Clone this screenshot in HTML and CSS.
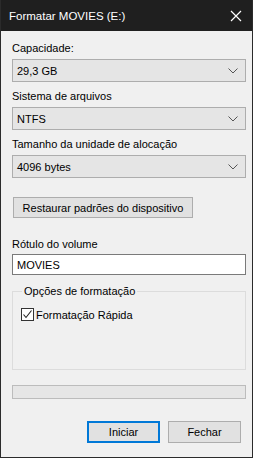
FILE: index.html
```html
<!DOCTYPE html>
<html lang="pt-BR">
<head>
  <meta charset="UTF-8">
  <title>Formatar MOVIES (E:)</title>
  <link rel="stylesheet" href="styles.css">
</head>
<body>
  <div class="window">
    <div class="titlebar">
      <span class="title">Formatar MOVIES (E:)</span>
      <span class="close">
        <svg width="12" height="12" viewBox="0 0 12 12"><path d="M1 1 L11 11 M11 1 L1 11" stroke="#fff" stroke-width="1.2" fill="none"/></svg>
      </span>
    </div>

    <div class="content">
      <label class="lbl first">Capacidade:</label>
      <div class="combo"><span>29,3 GB</span><svg class="arrow" width="10" height="6" viewBox="0 0 10 6"><path d="M0.5 0.5 L5 5 L9.5 0.5" stroke="#555" fill="none"/></svg></div>

      <label class="lbl">Sistema de arquivos</label>
      <div class="combo"><span>NTFS</span><svg class="arrow" width="10" height="6" viewBox="0 0 10 6"><path d="M0.5 0.5 L5 5 L9.5 0.5" stroke="#555" fill="none"/></svg></div>

      <label class="lbl">Tamanho da unidade de alocação</label>
      <div class="combo"><span>4096 bytes</span><svg class="arrow" width="10" height="6" viewBox="0 0 10 6"><path d="M0.5 0.5 L5 5 L9.5 0.5" stroke="#555" fill="none"/></svg></div>

      <button class="btn restore">Restaurar padrões do dispositivo</button>

      <label class="lbl vol">Rótulo do volume</label>
      <div class="textbox">MOVIES</div>

      <fieldset class="group">
        <legend>Opções de formatação</legend>
        <div class="check">
          <span class="box"><svg width="11" height="11" viewBox="0 0 11 11"><path d="M1.5 5.5 L4 8.5 L9.5 1.5" stroke="#222" stroke-width="1.1" fill="none"/></svg></span>
          <span>Formatação Rápida</span>
        </div>
      </fieldset>

      <div class="progress"></div>

      <div class="actions">
        <button class="btn action default">Iniciar</button>
        <button class="btn action">Fechar</button>
      </div>
    </div>
  </div>
</body>
</html>
```

FILE: styles.css
```css
* {
  box-sizing: border-box;
}

body {
  margin: 0;
  font-family: 'Liberation Sans', 'Noto Sans', sans-serif;
  font-size: 11px;
  color: #000;
  background-color: #2b2b2b;
}

.window {
  width: 253px;
  height: 458px;
  border: 1px solid #2b2b2b;
  border-top: none;
  background-color: #f0f0f0;
  display: flex;
  flex-direction: column;
}

.titlebar {
  height: 31px;
  background-color: #1f1f1f;
  color: #fff;
  display: flex;
  align-items: center;
  justify-content: space-between;
  padding: 0 10px 0 8px;
  font-size: 11.5px;
}

.close {
  display: flex;
}

.content {
  padding: 0 6px 0 11px;
  display: flex;
  flex-direction: column;
}

.lbl {
  display: block;
  line-height: 16px;
  margin-top: 6px;
  margin-bottom: 3px;
}

.lbl.first {
  margin-top: 9px;
}

.combo {
  height: 23px;
  background-color: #e5e5e5;
  border: 1px solid #adadad;
  display: flex;
  align-items: center;
  justify-content: space-between;
  padding: 0 7px 0 4px;
}

.btn {
  font-family: inherit;
  font-size: 11px;
  color: #000;
  background-color: #e1e1e1;
  border: 1px solid #adadad;
  padding: 0;
}

.restore {
  width: 180px;
  height: 21px;
  margin-top: 19px;
  margin-left: 1px;
}

.lbl.vol {
  margin-top: 18px;
  margin-bottom: 2px;
}

.textbox {
  height: 21px;
  background-color: #fff;
  border: 1px solid #7a7a7a;
  padding: 0 4px;
  display: flex;
  align-items: center;
}

.group {
  margin: 8px 0 0 0;
  padding: 9px 8px 0 8px;
  height: 87px;
  border: 1px solid #dcdcdc;
  min-width: 0;
}

.group legend {
  padding: 0 2px;
  margin-left: 1px;
  line-height: 16px;
}

.check {
  display: flex;
  align-items: center;
  gap: 2px;
}

.box {
  width: 13px;
  height: 13px;
  border: 1px solid #333;
  background-color: #fff;
  display: flex;
  align-items: center;
  justify-content: center;
}

.progress {
  margin-top: 15px;
  height: 14px;
  background-color: #e6e6e6;
  border: 1px solid #bcbcbc;
}

.actions {
  margin-top: 22px;
  display: flex;
  justify-content: flex-end;
  gap: 8px;
  padding-right: 5px;
}

.action {
  width: 73px;
  height: 22px;
}

.action.default {
  border: 2px solid #0078d7;
}
```
